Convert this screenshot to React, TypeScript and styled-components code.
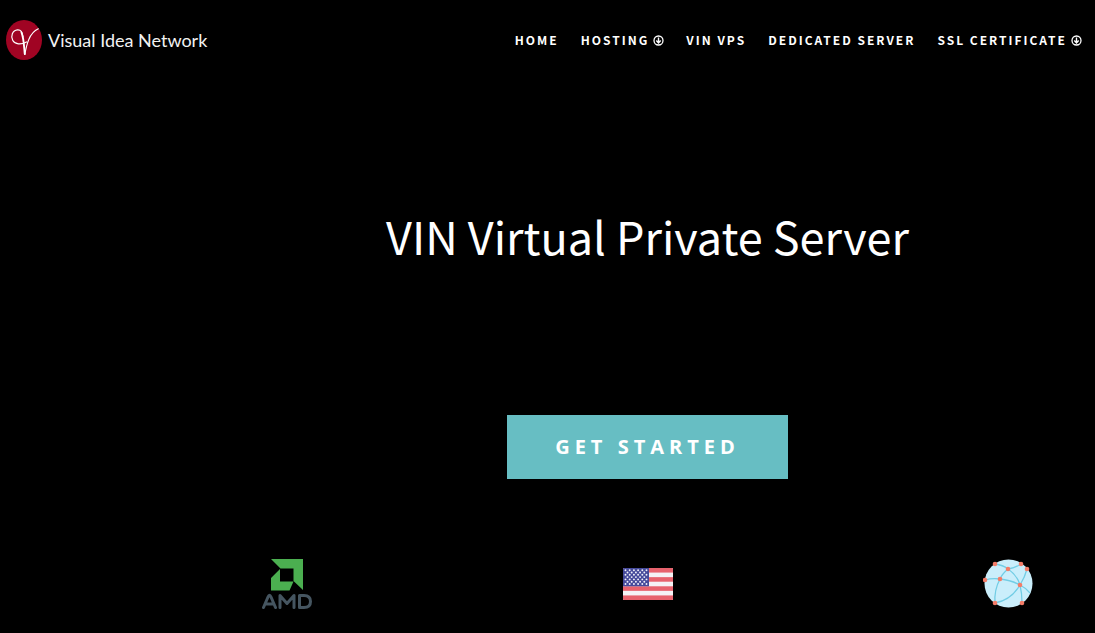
import React from "react";
import styled, { createGlobalStyle } from "styled-components";

const GlobalStyle = createGlobalStyle`
  *, *::before, *::after { box-sizing: border-box; }
  body {
    margin: 0;
    background: #000;
    color: #fff;
    font-family: "Noto Sans CJK SC", "Noto Sans", sans-serif;
  }
`;

const Header = styled.header`
  display: flex;
  align-items: center;
  justify-content: space-between;
  height: 80px;
  padding: 0 13px 0 6px;
`;

const Brand = styled.a`
  display: flex;
  align-items: center;
  gap: 6px;
  color: #f2f2f2;
  font-family: Lato, sans-serif;
  font-size: 18px;
  line-height: 24px;
  white-space: nowrap;
  text-decoration: none;
`;

const Nav = styled.nav`
  display: flex;
  align-items: center;
  gap: 22px;
`;

const NavLink = styled.a`
  display: flex;
  align-items: center;
  gap: 4px;
  color: #fff;
  font-size: 12px;
  font-weight: 700;
  line-height: 20px;
  letter-spacing: 2px;
  white-space: nowrap;
  text-decoration: none;
`;

const Hero = styled.main`
  display: flex;
  flex-direction: column;
  align-items: center;
  padding: 123px 0 24px 200px;
`;

const Title = styled.h1`
  margin: 0;
  font-size: 45px;
  font-weight: 400;
  line-height: 66px;
  text-align: center;
`;

const CallToAction = styled.button`
  margin-top: 146px;
  padding: 16px 48px;
  border: 0;
  background: #67bec3;
  color: #fff;
  font-family: "Open Sans", sans-serif;
  font-size: 20px;
  font-weight: 700;
  line-height: 32px;
  letter-spacing: 5px;
  cursor: pointer;
`;

const Features = styled.ul`
  display: flex;
  align-self: stretch;
  align-items: center;
  justify-content: space-between;
  margin: 80px 0 0;
  padding: 0 62px;
  list-style: none;
`;

const Feature = styled.li`
  display: flex;
`;

const BrandMark = () => (
  <svg width="36" height="40" viewBox="0 0 36 40" aria-hidden="true">
    <ellipse cx="18" cy="20" rx="18" ry="20" fill="#a00423" />
    <g fill="none" stroke="#fff" strokeLinecap="round" strokeLinejoin="round">
      <path d="M20.500 22C15 25 9 24.500 6.800 20.500C4.300 16 6.500 10.300 11.500 9.800C15 9.500 16 12 17 17" strokeWidth="1.200" />
      <path d="M15.500 12.500C17.800 18 18 26 18.800 34" strokeWidth="1.900" />
      <path d="M18.800 34.500C20.500 25 23 13 32.300 8.800" strokeWidth="1.100" />
    </g>
  </svg>
);

const DownArrow = () => (
  <svg width="11" height="11" viewBox="0 0 11 11" fill="none" stroke="#fff" aria-hidden="true">
    <circle cx="5.500" cy="5.500" r="4.500" strokeWidth="1.300" />
    <path d="M5.500 2.500V7.800M3.300 5.600L5.500 7.900L7.700 5.600" strokeWidth="1.400" />
  </svg>
);

const AmdLogo = () => (
  <svg width="50" height="50" viewBox="0 0 50 50" role="img" aria-label="AMD">
    <path d="M9 0H41V31L31.500 22V9.500H18.500Z" fill="#4baf50" />
    <path d="M18 10V22.500H31.500L27.500 31.500H9V19Z" fill="#4baf50" />
    <g fill="none" stroke="#455560" strokeWidth="3" strokeLinejoin="round" strokeLinecap="round">
      <path d="M1.500 48.500L6 38Q7.500 34.500 9 38L13.500 48.500M4 45H11" />
      <path d="M18 48.500V36.500L25 44.500L32 36.500V48.500" />
      <path d="M37.500 36.500H42Q48.500 36.500 48.500 42.500T42 48.500H37.500Z" />
    </g>
  </svg>
);

const starRows = [0, 1, 2, 3, 4, 5, 6];
const redStripes = [0, 1, 2, 3];
const stripeHeight = 32 / 7;

const UsFlag = () => (
  <svg width="50" height="32" viewBox="0 0 50 32" role="img" aria-label="United States">
    <defs>
      <clipPath id="flag-shape">
        <rect width="50" height="32" rx="1" />
      </clipPath>
    </defs>
    <g clipPath="url(#flag-shape)">
      <rect width="50" height="32" fill="#f5f2f5" />
      {redStripes.map((n) => (
        <rect key={n} y={n * 2 * stripeHeight} width="50" height={stripeHeight} fill="#e7626d" />
      ))}
      <rect width="26" height="18.300" fill="#454a9b" />
      {starRows.map((row) =>
        (row % 2 ? [4.500, 8.700, 12.900, 17.100, 21.300] : [2.500, 6.700, 10.900, 15.100, 19.300, 23.500]).map((x) => (
          <circle key={`${row}-${x}`} cx={x} cy={2.200 + row * 2.300} r="0.950" fill="#f1f1fa" />
        ))
      )}
    </g>
  </svg>
);

const nodes = [
  [12, 5], [38, 5], [25, 10], [44, 10], [2, 21], [17, 20], [37, 26], [12, 44], [39, 44],
];

const Globe = () => (
  <svg width="50" height="50" viewBox="0 0 50 50" role="img" aria-label="Global network">
    <circle cx="25.500" cy="24.500" r="24" fill="#caeefb" />
    <g fill="none" stroke="#72cde5" strokeWidth="1.300">
      <path d="M12 5Q20 6 25 10Q32 9 38 5" />
      <path d="M25 10Q34 16 37 26Q39 34 39 44" />
      <path d="M25 10Q19 15 17 20Q11 31 12 44" />
      <path d="M2 21Q9 19 17 20Q28 21 37 26Q43 29 47 34" />
      <path d="M44 10Q42 18 37 26Q28 41 12 44" />
    </g>
    {nodes.map(([x, y]) => (
      <circle key={`${x}-${y}`} cx={x} cy={y} r="2.300" fill="#f47c68" />
    ))}
  </svg>
);

const links = [
  { label: "HOME" },
  { label: "HOSTING", menu: true },
  { label: "VIN VPS" },
  { label: "DEDICATED SERVER" },
  { label: "SSL CERTIFICATE", menu: true },
];

export default function App() {
  return (
    <>
      <GlobalStyle />
      <Header>
        <Brand href="#">
          <BrandMark />
          Visual Idea Network
        </Brand>
        <Nav aria-label="Main">
          {links.map(({ label, menu }) => (
            <NavLink key={label} href="#">
              {label}
              {menu && <DownArrow />}
            </NavLink>
          ))}
        </Nav>
      </Header>
      <Hero>
        <Title>VIN Virtual Private Server</Title>
        <CallToAction type="button">GET STARTED</CallToAction>
        <Features>
          <Feature><AmdLogo /></Feature>
          <Feature><UsFlag /></Feature>
          <Feature><Globe /></Feature>
        </Features>
      </Hero>
    </>
  );
}
